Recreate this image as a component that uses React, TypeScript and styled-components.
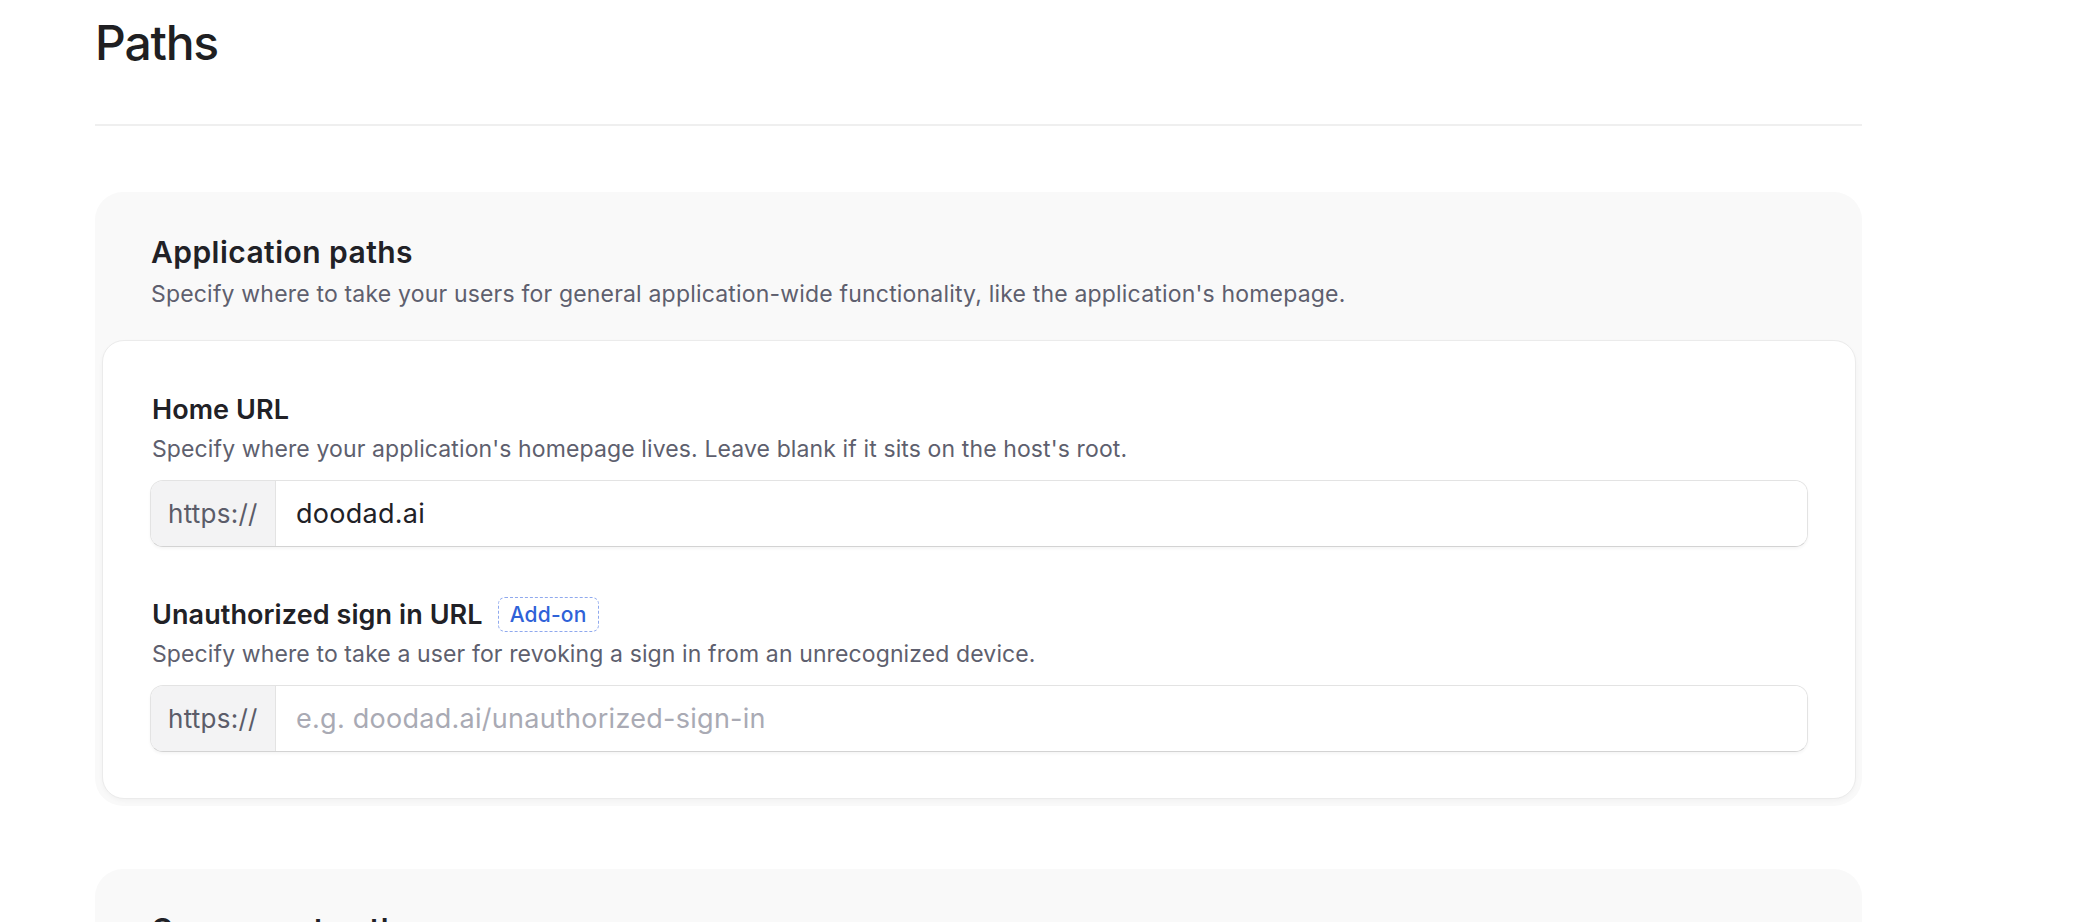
import React from "react";
import styled, { createGlobalStyle } from "styled-components";

const GlobalStyle = createGlobalStyle`
  html, body {
    margin: 0;
    padding: 0;
    background: #ffffff;
  }
  body {
    font-family: Inter, "Noto Sans", "Liberation Sans", sans-serif;
    color: #212126;
    -webkit-font-smoothing: antialiased;
  }
  * {
    box-sizing: border-box;
  }
`;

const Page = styled.main`
  width: 1767px;
  margin-left: 95px;
  padding-top: 15px;
`;

const Title = styled.h1`
  margin: 0;
  font-size: 48px;
  line-height: 56px;
  font-weight: 500;
  letter-spacing: -0.025em;
  color: #1f1f22;
`;

const Divider = styled.hr`
  margin: 53px 0 0;
  border: 0;
  border-top: 2px solid #efefef;
`;

const Sections = styled.div`
  display: flex;
  flex-direction: column;
  gap: 63px;
  margin-top: 66px;
`;

const Section = styled.section`
  background: #f9f9f9;
  border-radius: 28px;
`;

const SectionHeader = styled.header`
  padding: 42px 56px 30px;
`;

const Heading = styled.h2`
  margin: 0;
  font-size: 30px;
  line-height: 36px;
  font-weight: 600;
  letter-spacing: 0.015em;
  color: #212126;
`;

const Description = styled.p`
  margin: 8px 0 0;
  font-size: 23px;
  line-height: 32px;
  letter-spacing: 0.008em;
  color: #5e5f6e;
`;

const Panel = styled.div`
  margin: 0 6px 7px 7px;
  padding: 52px 47px 46px;
  background: #ffffff;
  border: 1px solid #ebebeb;
  border-radius: 22px;
  box-shadow: 0 2px 4px rgba(0, 0, 0, 0.03);
  display: flex;
  flex-direction: column;
  gap: 50px;
`;

const Field = styled.div`
  display: flex;
  flex-direction: column;
`;

const LabelRow = styled.div`
  display: flex;
  align-items: center;
  gap: 15px;
  padding-left: 2px;
`;

const Label = styled.label`
  font-size: 27px;
  line-height: 34px;
  font-weight: 600;
  letter-spacing: 0.003em;
  color: #212126;
`;

const Badge = styled.span`
  display: inline-flex;
  align-items: center;
  height: 35px;
  padding: 0 11px;
  border: 1.5px dashed #8fa9ee;
  border-radius: 7px;
  font-size: 21px;
  font-weight: 500;
  letter-spacing: 0.01em;
  color: #2f62d8;
`;

const Hint = styled.p`
  margin: 6px 0 0;
  padding-left: 2px;
  font-size: 23px;
  line-height: 32px;
  letter-spacing: 0.005em;
  color: #5e5f6e;
`;

const InputGroup = styled.div`
  margin-top: 15px;
  display: flex;
  height: 67px;
  border: 1.5px solid #e3e3e3;
  border-bottom-color: #d3d3d3;
  border-radius: 13px;
  overflow: hidden;
  box-shadow: 0 2px 3px rgba(0, 0, 0, 0.04);
`;

const Prefix = styled.span`
  display: flex;
  align-items: center;
  width: 125px;
  padding-left: 17px;
  background: #f3f3f4;
  border-right: 1.5px solid #e3e3e3;
  font-size: 26px;
  letter-spacing: 0.01em;
  color: #5b5c69;
`;

const Input = styled.input`
  flex: 1;
  border: 0;
  outline: none;
  padding: 0 20px;
  font-family: inherit;
  font-size: 27px;
  letter-spacing: 0.01em;
  color: #212126;
  background: #ffffff;

  &::placeholder {
    color: #a9aab4;
  }
`;

type PathField = {
  label: string;
  hint: string;
  value?: string;
  placeholder?: string;
  addOn?: boolean;
};

const applicationFields: PathField[] = [
  {
    label: "Home URL",
    hint: "Specify where your application's homepage lives. Leave blank if it sits on the host's root.",
    value: "doodad.ai",
  },
  {
    label: "Unauthorized sign in URL",
    hint: "Specify where to take a user for revoking a sign in from an unrecognized device.",
    placeholder: "e.g. doodad.ai/unauthorized-sign-in",
    addOn: true,
  },
];

const App: React.FC = () => {
  return (
    <>
      <GlobalStyle />
      <Page>
        <Title>Paths</Title>
        <Divider />
        <Sections>
          <Section>
            <SectionHeader>
              <Heading>Application paths</Heading>
              <Description>
                Specify where to take your users for general application-wide
                functionality, like the application's homepage.
              </Description>
            </SectionHeader>
            <Panel>
              {applicationFields.map((field) => (
                <Field key={field.label}>
                  <LabelRow>
                    <Label>{field.label}</Label>
                    {field.addOn && <Badge>Add-on</Badge>}
                  </LabelRow>
                  <Hint>{field.hint}</Hint>
                  <InputGroup>
                    <Prefix>https://</Prefix>
                    <Input
                      defaultValue={field.value}
                      placeholder={field.placeholder}
                    />
                  </InputGroup>
                </Field>
              ))}
            </Panel>
          </Section>
          <Section>
            <SectionHeader>
              <Heading>Component paths</Heading>
              <Description>
                Specify where to take your users for Clerk components such as
                sign in and sign up.
              </Description>
            </SectionHeader>
          </Section>
        </Sections>
      </Page>
    </>
  );
};

export default App;
